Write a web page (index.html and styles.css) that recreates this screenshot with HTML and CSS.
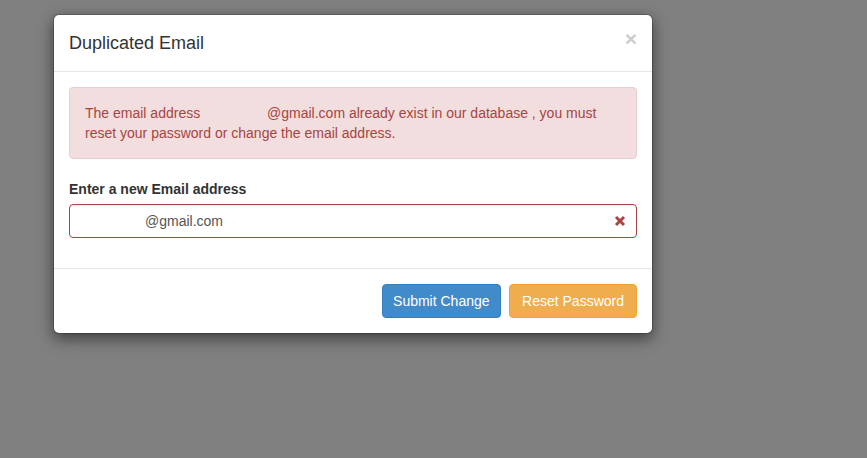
FILE: index.html
```html
<!DOCTYPE html>
<html lang="en">
<head>
<meta charset="utf-8">
<title>Duplicated Email</title>
<link rel="stylesheet" href="styles.css">
</head>
<body>
<div class="backdrop">
  <div class="modal">
    <div class="modal-header">
      <h4 class="modal-title">Duplicated Email</h4>
      <button class="close" type="button" aria-label="Close">×</button>
    </div>
    <div class="modal-body">
      <div class="alert">The email address &ensp;&ensp;&ensp;&ensp;&ensp;&ensp;&ensp;&ensp;&ensp;@gmail.com already exist in our database , you must reset your password or change the email address.</div>
      <div class="form-group">
        <label class="label" for="email">Enter a new Email address</label>
        <div class="input-wrap">
          <input id="email" class="input" type="text" value="@gmail.com">
          <svg class="feedback" viewBox="0 0 12 12" width="12" height="12" aria-hidden="true">
            <path d="M2 2 L10 10 M10 2 L2 10" stroke="#a94442" stroke-width="3" stroke-linecap="butt" fill="none"/>
          </svg>
        </div>
      </div>
    </div>
    <div class="modal-footer">
      <button class="btn btn-primary" type="button">Submit Change</button>
      <button class="btn btn-warning" type="button">Reset Password</button>
    </div>
  </div>
</div>
</body>
</html>
```

FILE: styles.css
```css
* { box-sizing: border-box; }
html, body { margin: 0; padding: 0; }
body {
  background: #808080;
  font-family: "Liberation Sans", Arial, Helvetica, sans-serif;
  font-size: 14px;
  line-height: 20px;
  color: #333;
  min-height: 458px;
}
.backdrop {
  padding: 14px 0 0 53px;
}
.modal {
  width: 600px;
  background: #fff;
  border: 1px solid rgba(0,0,0,.2);
  border-radius: 6px;
  box-shadow: 0 5px 15px rgba(0,0,0,.5);
  background-clip: padding-box;
}
.modal-header {
  display: flex;
  justify-content: space-between;
  align-items: flex-start;
  padding: 15px;
  border-bottom: 1px solid #e5e5e5;
}
.modal-title {
  margin: 0;
  font-size: 18px;
  font-weight: 500;
  line-height: 26px;
  color: #333;
}
.close {
  background: none;
  border: 0;
  padding: 0;
  margin-top: -2px;
  font-family: "Liberation Sans", Arial, sans-serif;
  font-size: 21px;
  font-weight: bold;
  line-height: 1;
  color: #000;
  opacity: .2;
  text-shadow: 0 1px 0 #fff;
  cursor: pointer;
}
.modal-body {
  padding: 15px;
}
.alert {
  padding: 15px;
  margin-bottom: 20px;
  border: 1px solid #ebccd1;
  border-radius: 4px;
  background: #f2dede;
  color: #a94442;
}
.form-group {
  margin-bottom: 15px;
}
.label {
  display: block;
  font-weight: bold;
  margin-bottom: 5px;
  color: #333;
}
.input-wrap {
  position: relative;
}
.input {
  display: block;
  width: 100%;
  height: 34px;
  padding: 6px 34px 6px 75px;
  font-family: "Liberation Sans", Arial, sans-serif;
  font-size: 14px;
  line-height: 20px;
  color: #555;
  background: #fff;
  border: 1px solid #a94442;
  border-radius: 4px;
  box-shadow: inset 0 1px 1px rgba(0,0,0,.075);
  outline: none;
}
.feedback {
  position: absolute;
  right: 11px;
  top: 11px;
}
.modal-footer {
  display: flex;
  justify-content: flex-end;
  gap: 8px;
  padding: 15px;
  border-top: 1px solid #e5e5e5;
}
.btn {
  padding: 6px 12px;
  font-family: "Liberation Sans", Arial, sans-serif;
  font-size: 14px;
  line-height: 20px;
  border: 1px solid transparent;
  border-radius: 4px;
  color: #fff;
  cursor: pointer;
}
.btn-primary {
  padding: 6px 10.5px;
  background: #428bca;
  border-color: #357ebd;
}
.btn-warning {
  background: #f0ad4e;
  border-color: #eea236;
}
```
